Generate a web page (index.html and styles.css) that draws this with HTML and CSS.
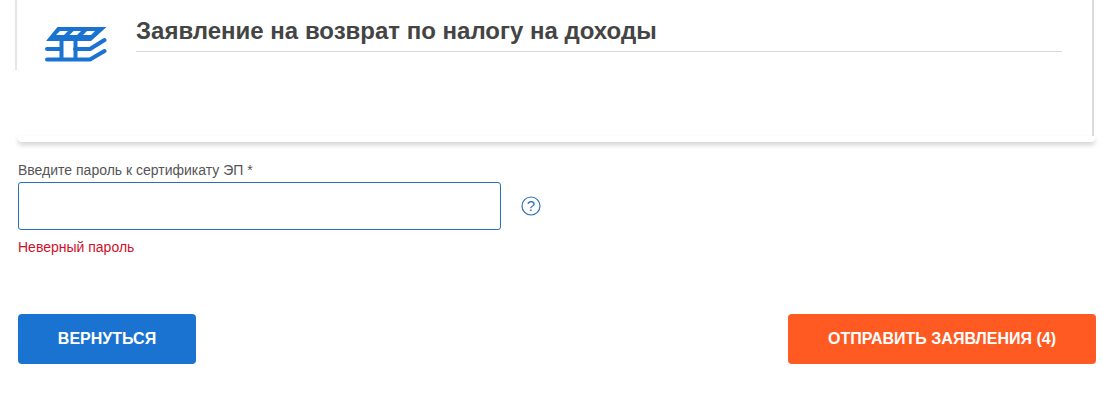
FILE: index.html
```html
<!DOCTYPE html>
<html lang="ru">
<head>
<meta charset="utf-8">
<title>Заявление</title>
<link rel="stylesheet" href="styles.css">
</head>
<body>
<div class="panel">
  <div class="panel-head">
    <svg class="logo" width="62" height="36" viewBox="0 0 62 36" fill="none">
      <path d="M12.500 1H61.500L46 15H1Z" fill="#1a73d0"/>
      <path d="M15 5H23L19 9H11ZM28.500 5H36L32 9H24.500ZM42 5H50L46 9H38Z" fill="#fff"/>
      <path d="M2 23H16M30 23H45L59.500 14M2 33.500H45L59.500 25" stroke="#1a73d0" stroke-width="4" stroke-linecap="round" stroke-linejoin="round"/>
      <path d="M16.500 14V34M30.500 14V34" stroke="#1a73d0" stroke-width="4"/>
    </svg>
    <h1 class="title">Заявление на возврат по налогу на доходы</h1>
  </div>
</div>
<div class="panel-foot"></div>
<form class="form">
  <label class="field-label" for="pw">Введите пароль к сертификату ЭП *</label>
  <div class="field-row">
    <input class="field-input" id="pw" type="password">
    <svg class="help" width="20" height="20" viewBox="0 0 20 20" fill="none">
      <circle cx="10" cy="10" r="9" stroke="#2a72b5" stroke-width="1.200"/>
      <text x="10" y="15" text-anchor="middle" class="help-mark">?</text>
    </svg>
  </div>
  <div class="field-error">Неверный пароль</div>
  <div class="actions">
    <button class="btn btn-back" type="button">ВЕРНУТЬСЯ</button>
    <button class="btn btn-send" type="button">ОТПРАВИТЬ ЗАЯВЛЕНИЯ (4)</button>
  </div>
</form>
</body>
</html>
```
FILE: styles.css
```css
* { box-sizing: border-box; }
html, body { margin: 0; background: #fff; }
body {
  width: 1103px;
  height: 406px;
  overflow: hidden;
  font-family: "Liberation Sans", Arial, sans-serif;
}
.panel {
  margin-left: 15px;
  width: 1079px;
  height: 136px;
  border-right: 2px solid #dcdcdc;
}
.panel-head {
  height: 70px;
  border-left: 2px solid #e6e6e6;
  padding-left: 28px;
  display: flex;
  align-items: flex-start;
}
.logo { margin-top: 26px; flex: none; }
.title {
  margin: 0 0 0 29px;
  width: 926px;
  height: 52px;
  padding-top: 17px;
  border-bottom: 1px solid #d9d9d9;
  font-size: 24px;
  line-height: 28px;
  font-weight: 700;
  color: #444;
}
.panel-foot {
  margin-left: 18px;
  width: 1077px;
  height: 6px;
  background: #fff;
  border-radius: 0 0 4px 4px;
  box-shadow: 0 3px 5px rgba(0,0,0,.18);
}
.form { padding: 20px 7px 0 18px; }
.field-label {
  display: block;
  font-size: 14px;
  line-height: 16px;
  color: #555;
}
.field-row {
  margin-top: 4px;
  display: flex;
  align-items: center;
  gap: 20px;
}
.field-input {
  width: 483px;
  height: 48px;
  border: 1px solid #2a72b5;
  border-radius: 3px;
  outline: none;
  background: #fff;
}
.help { flex: none; }
.help-mark {
  font-family: "Liberation Sans", Arial, sans-serif;
  font-size: 15px;
  fill: #2a72b5;
}
.field-error {
  margin-top: 9px;
  font-size: 14px;
  line-height: 16px;
  color: #d0112b;
}
.actions {
  margin-top: 59px;
  display: flex;
  justify-content: space-between;
}
.btn {
  height: 50px;
  border: 0;
  border-radius: 4px;
  color: #fff;
  font-family: "Liberation Sans", Arial, sans-serif;
  font-size: 16px;
  font-weight: 700;
  padding: 0;
}
.btn-back { width: 178px; background: #1a73d0; }
.btn-send { width: 308px; background: #ff5a22; }
```
